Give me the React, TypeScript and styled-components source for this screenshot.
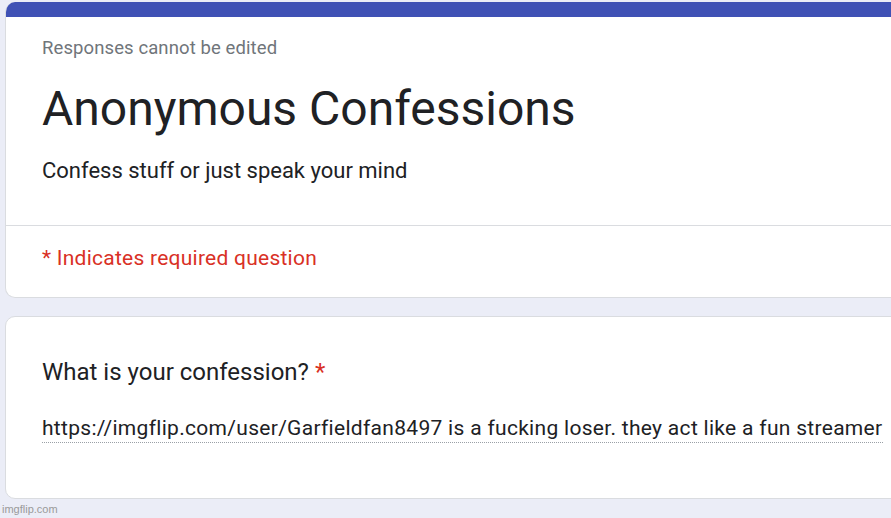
import React from "react";
import styled, { createGlobalStyle } from "styled-components";

const GlobalStyle = createGlobalStyle`
  html, body {
    margin: 0;
    padding: 0;
    background: #ebedf7;
    font-family: Roboto, "Noto Sans", Arial, sans-serif;
    overflow: hidden;
  }
`;

const Page = styled.div`
  position: relative;
  width: 891px;
  height: 518px;
  padding: 2px 0 0 5px;
  box-sizing: border-box;
  display: flex;
  flex-direction: column;
  gap: 18px;
`;

const Card = styled.div<{ accent?: boolean }>`
  width: 910px;
  background: #ffffff;
  border: 1px solid #dadce0;
  border-radius: 10px;
  overflow: hidden;
  box-sizing: border-box;
  ${(p) => (p.accent ? "border-top: none;" : "")}
`;

const TopBar = styled.div`
  height: 15px;
  background: #3f51b5;
`;

const Header = styled.div`
  padding: 19px 0 0 36px;
  height: 209px;
  box-sizing: border-box;
  border-bottom: 1px solid #dadce0;
`;

const Note = styled.div`
  font-size: 18.5px;
  color: #70757a;
  letter-spacing: 0.1px;
  line-height: 24px;
`;

const Title = styled.h1`
  margin: 19px 0 0;
  font-size: 48px;
  font-weight: 400;
  color: #202124;
  line-height: 60px;
`;

const Description = styled.div`
  margin-top: 18px;
  font-size: 22px;
  color: #202124;
  line-height: 28px;
`;

const Required = styled.div`
  padding: 20px 0 0 36px;
  height: 71px;
  box-sizing: border-box;
  font-size: 21px;
  color: #d93025;
  letter-spacing: 0.25px;
  line-height: 24px;
`;

const QuestionCard = styled(Card)`
  height: 183px;
  padding: 40px 0 0 36px;
`;

const Question = styled.div`
  font-size: 24px;
  color: #202124;
  line-height: 30px;
`;

const Star = styled.span`
  color: #d93025;
`;

const Answer = styled.div`
  margin-top: 27px;
  width: 841px;
  font-size: 21px;
  color: #202124;
  letter-spacing: 0.3px;
  line-height: 28px;
  white-space: nowrap;
  border-bottom: 1px dotted #9aa0a6;
`;

const Watermark = styled.div`
  position: absolute;
  left: 2px;
  bottom: 3px;
  font-family: "Liberation Sans", Arial, sans-serif;
  font-size: 11px;
  color: #9a9a9a;
`;

export default function App() {
  return (
    <>
      <GlobalStyle />
      <Page>
        <Card accent>
          <TopBar />
          <Header>
            <Note>Responses cannot be edited</Note>
            <Title>Anonymous Confessions</Title>
            <Description>Confess stuff or just speak your mind</Description>
          </Header>
          <Required>* Indicates required question</Required>
        </Card>
        <QuestionCard>
          <Question>
            What is your confession? <Star>*</Star>
          </Question>
          <Answer>
            https://imgflip.com/user/Garfieldfan8497 is a fucking loser. they act like a fun streamer
          </Answer>
        </QuestionCard>
        <Watermark>imgflip.com</Watermark>
      </Page>
    </>
  );
}
